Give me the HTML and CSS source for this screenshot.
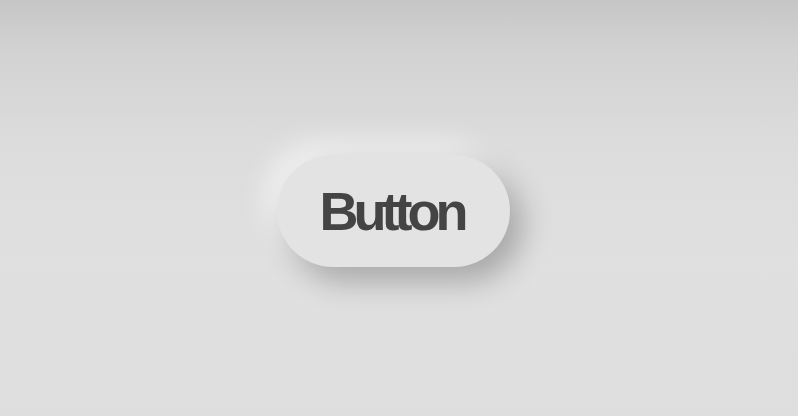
FILE: index.html
```html
<!DOCTYPE html>
<html lang="en">
<head>
    <meta charset="UTF-8">
    <meta name="viewport" content="width=device-width, initial-scale=1.0">
    <title>Button</title>
    <link rel="stylesheet" href="styles.css">
</head>
<body>
    <div class="stage">
        <button class="neu-btn">Button</button>
    </div>
</body>
</html>
```

FILE: styles.css
```css
html, body {
    height: 100%;
}
body {
    margin: 0;
    font-family: 'Liberation Sans', Arial, sans-serif;
    background: linear-gradient(#c6c6c6 0, #d2d2d2 50px, #dcdcdc 140px, #e0e0e0 260px, #dedede 100%);
}
.stage {
    height: 100%;
    box-sizing: border-box;
    display: flex;
    align-items: center;
    justify-content: center;
    padding: 6px 11px 0 0;
}
.neu-btn {
    width: 233px;
    height: 112px;
    border: none;
    border-radius: 56px;
    background: #e3e3e3;
    color: #444;
    font-family: inherit;
    font-size: 54px;
    font-weight: bold;
    letter-spacing: -5px;
    padding: 0 4px 0 0;
    box-shadow: 12px 14px 30px rgba(0, 0, 0, 0.26),
                -12px -12px 28px rgba(255, 255, 255, 0.6);
    cursor: pointer;
}
```
